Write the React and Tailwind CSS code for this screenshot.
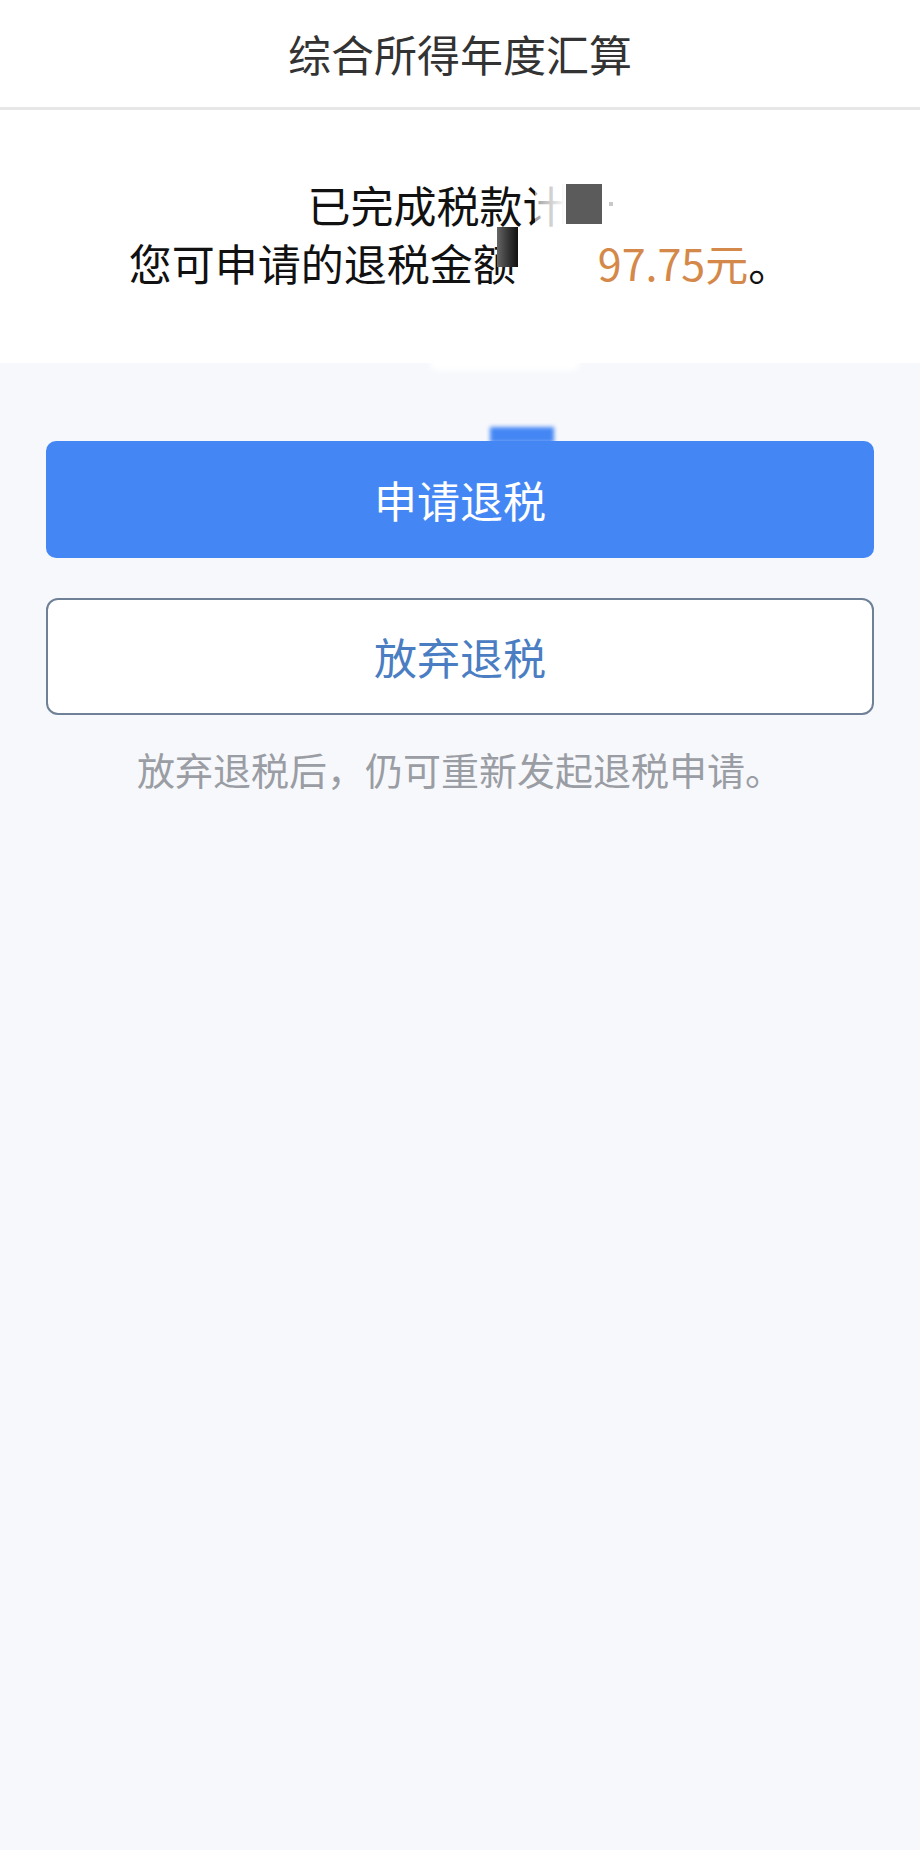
import React from "react";

const font = { fontFamily: '"Noto Sans CJK SC", "Noto Sans", sans-serif' };

export default function App() {
  return (
    <div className="min-h-[1850px] w-[920px] bg-[#f7f8fc]" style={font}>
      {/* header */}
      <header className="flex h-[107px] items-center justify-center bg-white">
        <h1 className="text-[43px] leading-none text-[#333333]">综合所得年度汇算</h1>
      </header>
      <div className="h-[3px] bg-[#e6e6e6]" />

      {/* result */}
      <section className="relative bg-white pb-[72px] pt-[65px] text-[43px] leading-[58px] text-[#111111]">
        <div className="flex items-center justify-center">
          <span>已完成税款</span>
          <span className="relative">
            计
            <span className="absolute inset-y-0 left-[12px] right-0 bg-gradient-to-r from-white/60 to-white" />
          </span>
          <span className="ml-[-4px] inline-block h-[40px] w-[40px] bg-[#5b5b5b]" />
          <span className="ml-[7px] inline-block h-[4px] w-[4px] bg-[#c8c8c8]" />
        </div>
        <div className="flex items-center justify-center">
          <span className="relative">
            您可申请的退税金额
            <span className="absolute right-[-2px] top-[-6px] h-[40px] w-[21px] bg-gradient-to-r from-[#666666] to-[#111111]" />
          </span>
          <span className="inline-block w-[82px]" />
          <span className="text-[#d4894a]">97.75元</span>
          <span>。</span>
        </div>
        {/* smudge left over from the redaction */}
        <span className="absolute bottom-[-8px] left-[430px] h-[16px] w-[150px] rounded-full bg-white blur-[3px]" />
      </section>

      {/* actions */}
      <div className="flex flex-col px-[46px] pt-[78px]">
        <div className="relative">
          <span className="absolute left-[444px] top-[-14px] h-[16px] w-[64px] bg-[#4487f4] blur-[2px]" />
          <button className="relative flex h-[117px] w-full items-center justify-center rounded-[10px] bg-[#4487f4] text-[43px] text-white">
            申请退税
          </button>
        </div>
        <button className="mt-[40px] flex h-[117px] items-center justify-center rounded-[12px] border-2 border-[#6f8196] bg-white text-[43px] text-[#4a7dc2]">
          放弃退税
        </button>
        <p className="mt-[29px] text-center text-[38px] leading-[50px] text-[#9a9da3]">
          放弃退税后，仍可重新发起退税申请。
        </p>
      </div>
    </div>
  );
}
